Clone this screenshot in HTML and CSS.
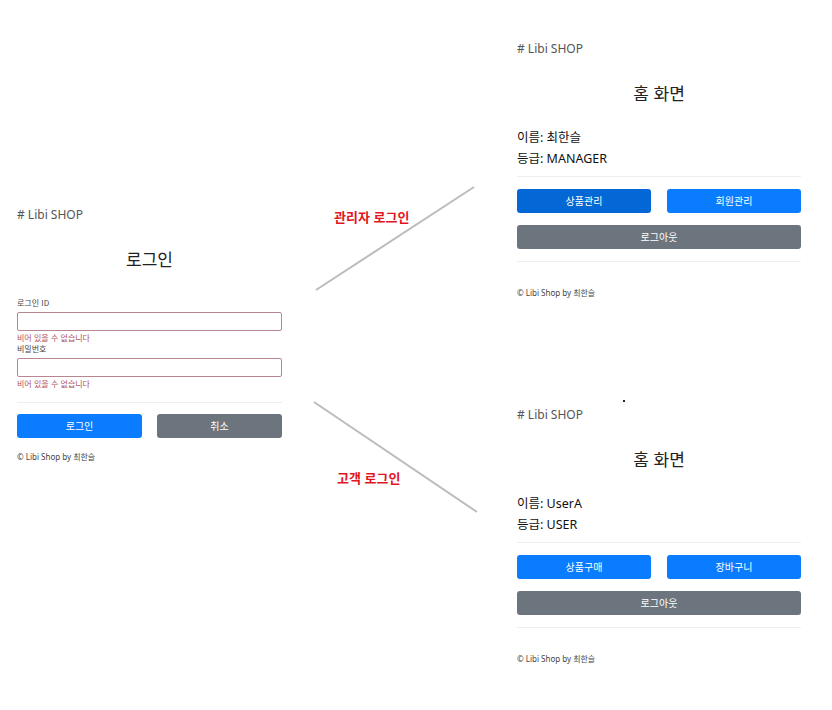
FILE: index.html
```html
<!DOCTYPE html>
<html lang="ko">
<head>
<meta charset="utf-8">
<title>Libi SHOP</title>
<link rel="stylesheet" href="styles.css">
</head>
<body>
<div class="canvas">
  <svg class="links" width="832" height="710" viewBox="0 0 832 710">
    <line x1="316" y1="290" x2="474" y2="187" />
    <line x1="314" y1="402" x2="477" y2="512" />
    <rect x="623" y="400" width="2" height="2" fill="#222" stroke="none" />
  </svg>
  <div class="tag tag-admin">관리자 로그인</div>
  <div class="tag tag-user">고객 로그인</div>

  <section class="panel login">
    <div class="brand">#&nbsp;Libi SHOP</div>
    <h1 class="title">로그인</h1>
    <label class="label first">로그인 ID</label>
    <div class="input invalid"></div>
    <div class="error">비어 있을 수 없습니다</div>
    <label class="label">비밀번호</label>
    <div class="input invalid"></div>
    <div class="error">비어 있을 수 없습니다</div>
    <hr class="rule">
    <div class="btn-row">
      <button class="btn primary">로그인</button>
      <button class="btn secondary">취소</button>
    </div>
    <footer class="foot">© Libi Shop by 최한슬</footer>
  </section>

  <section class="panel home home-admin">
    <div class="brand">#&nbsp;Libi SHOP</div>
    <h1 class="title">홈 화면</h1>
    <div class="info first">이름: 최한슬</div>
    <div class="info">등급: MANAGER</div>
    <hr class="rule r1">
    <div class="btn-row">
      <button class="btn primary focus">상품관리</button>
      <button class="btn primary">회원관리</button>
    </div>
    <button class="btn secondary wide">로그아웃</button>
    <hr class="rule r2">
    <footer class="foot">© Libi Shop by 최한슬</footer>
  </section>

  <section class="panel home home-user">
    <div class="brand">#&nbsp;Libi SHOP</div>
    <h1 class="title">홈 화면</h1>
    <div class="info first">이름: UserA</div>
    <div class="info">등급: USER</div>
    <hr class="rule r1">
    <div class="btn-row">
      <button class="btn primary">상품구매</button>
      <button class="btn primary">장바구니</button>
    </div>
    <button class="btn secondary wide">로그아웃</button>
    <hr class="rule r2">
    <footer class="foot">© Libi Shop by 최한슬</footer>
  </section>
</div>
</body>
</html>
```
FILE: styles.css
```css
* { box-sizing: border-box; }
html, body { margin: 0; padding: 0; background: #fff; }
body {
  font-family: "Noto Sans", "Noto Sans CJK KR", sans-serif;
  color: #212529;
}
.canvas {
  position: relative;
  width: 832px;
  height: 710px;
  overflow: hidden;
  background: #fff;
}
.links {
  position: absolute;
  left: 0;
  top: 0;
}
.links line {
  stroke: #bcbcbc;
  stroke-width: 2;
}
.tag {
  position: absolute;
  font-family: "Noto Sans CJK KR", sans-serif;
  font-weight: 700;
  font-size: 13px;
  line-height: 16px;
  color: #e3151f;
  white-space: nowrap;
}
.tag-admin { left: 334px; top: 209px; }
.tag-user { left: 337px; top: 470px; }

.panel {
  position: absolute;
  display: flex;
  flex-direction: column;
}
.login { left: 17px; top: 205px; width: 265px; }
.home { left: 517px; width: 284px; }
.home-admin { top: 39px; }
.home-user { top: 405px; }

.brand {
  font-size: 12px;
  line-height: 20px;
  color: #555;
  white-space: nowrap;
}
.title {
  margin: 22px 0 0;
  font-family: "Noto Sans CJK KR", sans-serif;
  font-weight: 400;
  font-size: 17px;
  line-height: 24px;
  text-align: center;
  color: #222;
}
.label {
  display: block;
  font-family: "Noto Sans CJK KR", sans-serif;
  font-size: 8px;
  line-height: 11px;
  color: #444;
}
.label.first { margin-top: 26px; }
.input {
  margin-top: 4px;
  height: 19px;
  border: 1px solid #c9ced4;
  border-radius: 2px;
  background: #fff;
}
.input.invalid { border-color: #b98690; }
.error {
  margin-top: 1px;
  font-family: "Noto Sans CJK KR", sans-serif;
  font-size: 8px;
  line-height: 11px;
  color: #b0505e;
}
.rule {
  margin: 13px 0 0;
  border: 0;
  border-top: 1px solid #eceef0;
  height: 0;
}
.btn-row {
  margin-top: 11px;
  display: grid;
  grid-template-columns: 1fr 1fr;
  column-gap: 15px;
}
.btn {
  height: 24px;
  border: 0;
  border-radius: 3px;
  font-family: "Noto Sans CJK KR", sans-serif;
  font-size: 10px;
  line-height: 24px;
  padding: 0;
  color: #fff;
}
.primary { background: #0a7cff; }
.primary.focus { background: #0368d6; }
.secondary { background: #6c757d; }
.foot {
  margin-top: 13px;
  font-size: 8px;
  line-height: 12px;
  color: #444;
  white-space: nowrap;
}

.home .info {
  font-family: "Noto Sans", "Noto Sans CJK KR", sans-serif;
  font-size: 12.5px;
  line-height: 21px;
  color: #111;
}
.home .info.first { margin-top: 22px; }
.home .rule.r1 { margin-top: 7px; }
.home .btn-row { margin-top: 12px; column-gap: 16px; }
.home .wide { margin-top: 12px; width: 100%; }
.home .rule.r2 { margin-top: 12px; }
.home .foot { margin-top: 25px; }
```
